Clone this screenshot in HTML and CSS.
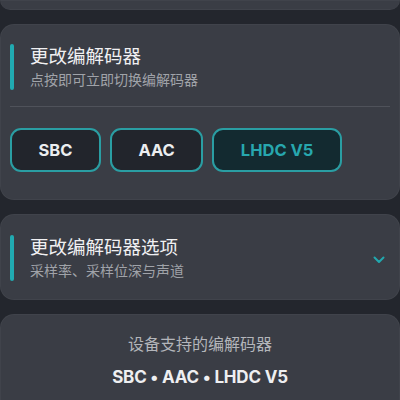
FILE: index.html
```html
<!DOCTYPE html>
<html lang="zh">
<head>
<meta charset="utf-8">
<link rel="stylesheet" href="styles.css">
</head>
<body>
<div class="page">
  <div class="card card-top"></div>

  <div class="card card-codec">
    <div class="header">
      <div class="bar"></div>
      <div class="texts">
        <div class="title">更改编解码器</div>
        <div class="sub">点按即可立即切换编解码器</div>
      </div>
    </div>
    <div class="divider"></div>
    <div class="buttons">
      <button class="btn">SBC</button>
      <button class="btn">AAC</button>
      <button class="btn active">LHDC V5</button>
    </div>
  </div>

  <div class="card card-options">
    <div class="header">
      <div class="bar"></div>
      <div class="texts">
        <div class="title">更改编解码器选项</div>
        <div class="sub">采样率、采样位深与声道</div>
      </div>
    </div>
    <svg class="chev" width="12" height="8" viewBox="0 0 12 8"><path d="M1.5 1.5 L6 6 L10.5 1.5" fill="none" stroke="#22a8ae" stroke-width="2" stroke-linecap="round" stroke-linejoin="round"/></svg>
  </div>

  <div class="card card-support">
    <div class="support-label">设备支持的编解码器</div>
    <div class="support-list">SBC • AAC • LHDC V5</div>
  </div>
</div>
</body>
</html>
```

FILE: styles.css
```css
html, body {
  margin: 0;
  padding: 0;
  background: #23262d;
  width: 400px;
  height: 400px;
  overflow: hidden;
}
body {
  font-family: "Inter", "Noto Sans CJK SC", sans-serif;
  color: #eeeff1;
}
.page {
  display: flex;
  flex-direction: column;
  gap: 14px;
}
.card {
  background: #3a3d45;
  border-radius: 14px;
  box-shadow: inset 0 0 0 1px rgba(255,255,255,0.035);
}
.card-top {
  height: 10px;
  border-radius: 0 0 14px 14px;
}
.card-codec {
  padding: 20px 10px 28px 10px;
}
.header {
  display: flex;
  align-items: stretch;
  gap: 16px;
}
.bar {
  width: 4px;
  border-radius: 2px;
  background: #21aab1;
}
.texts {
  display: flex;
  flex-direction: column;
}
.title {
  font-size: 18.5px;
  line-height: 24px;
  color: #f0f0f2;
}
.sub {
  font-size: 14px;
  line-height: 20px;
  margin-top: 2px;
  color: #a0a3a9;
}
.divider {
  height: 1px;
  background: #4f525a;
  margin-top: 16px;
}
.buttons {
  display: flex;
  gap: 9px;
  margin-top: 21px;
}
.btn {
  height: 44px;
  padding: 0 26.5px;
  border: 2px solid #2a9ea3;
  border-radius: 11px;
  background: #22252c;
  color: #eceef0;
  font-family: "Inter", sans-serif;
  font-weight: 700;
  font-size: 16.5px;
}
.btn.active {
  background: #132a30;
  color: #27a7ae;
}
.card-options {
  display: flex;
  align-items: center;
  justify-content: space-between;
  padding: 21px 15px 19px 10px;
}
.chev {
  margin-top: 3px;
}
.card-support {
  padding-top: 19px;
  height: 120px;
  display: flex;
  flex-direction: column;
  align-items: center;
}
.support-label {
  font-size: 16px;
  line-height: 22px;
  color: #b3b5ba;
}
.support-list {
  margin-top: 10px;
  font-size: 17px;
  line-height: 24px;
  font-weight: 700;
  letter-spacing: -0.2px;
  color: #eeeff1;
}
```
